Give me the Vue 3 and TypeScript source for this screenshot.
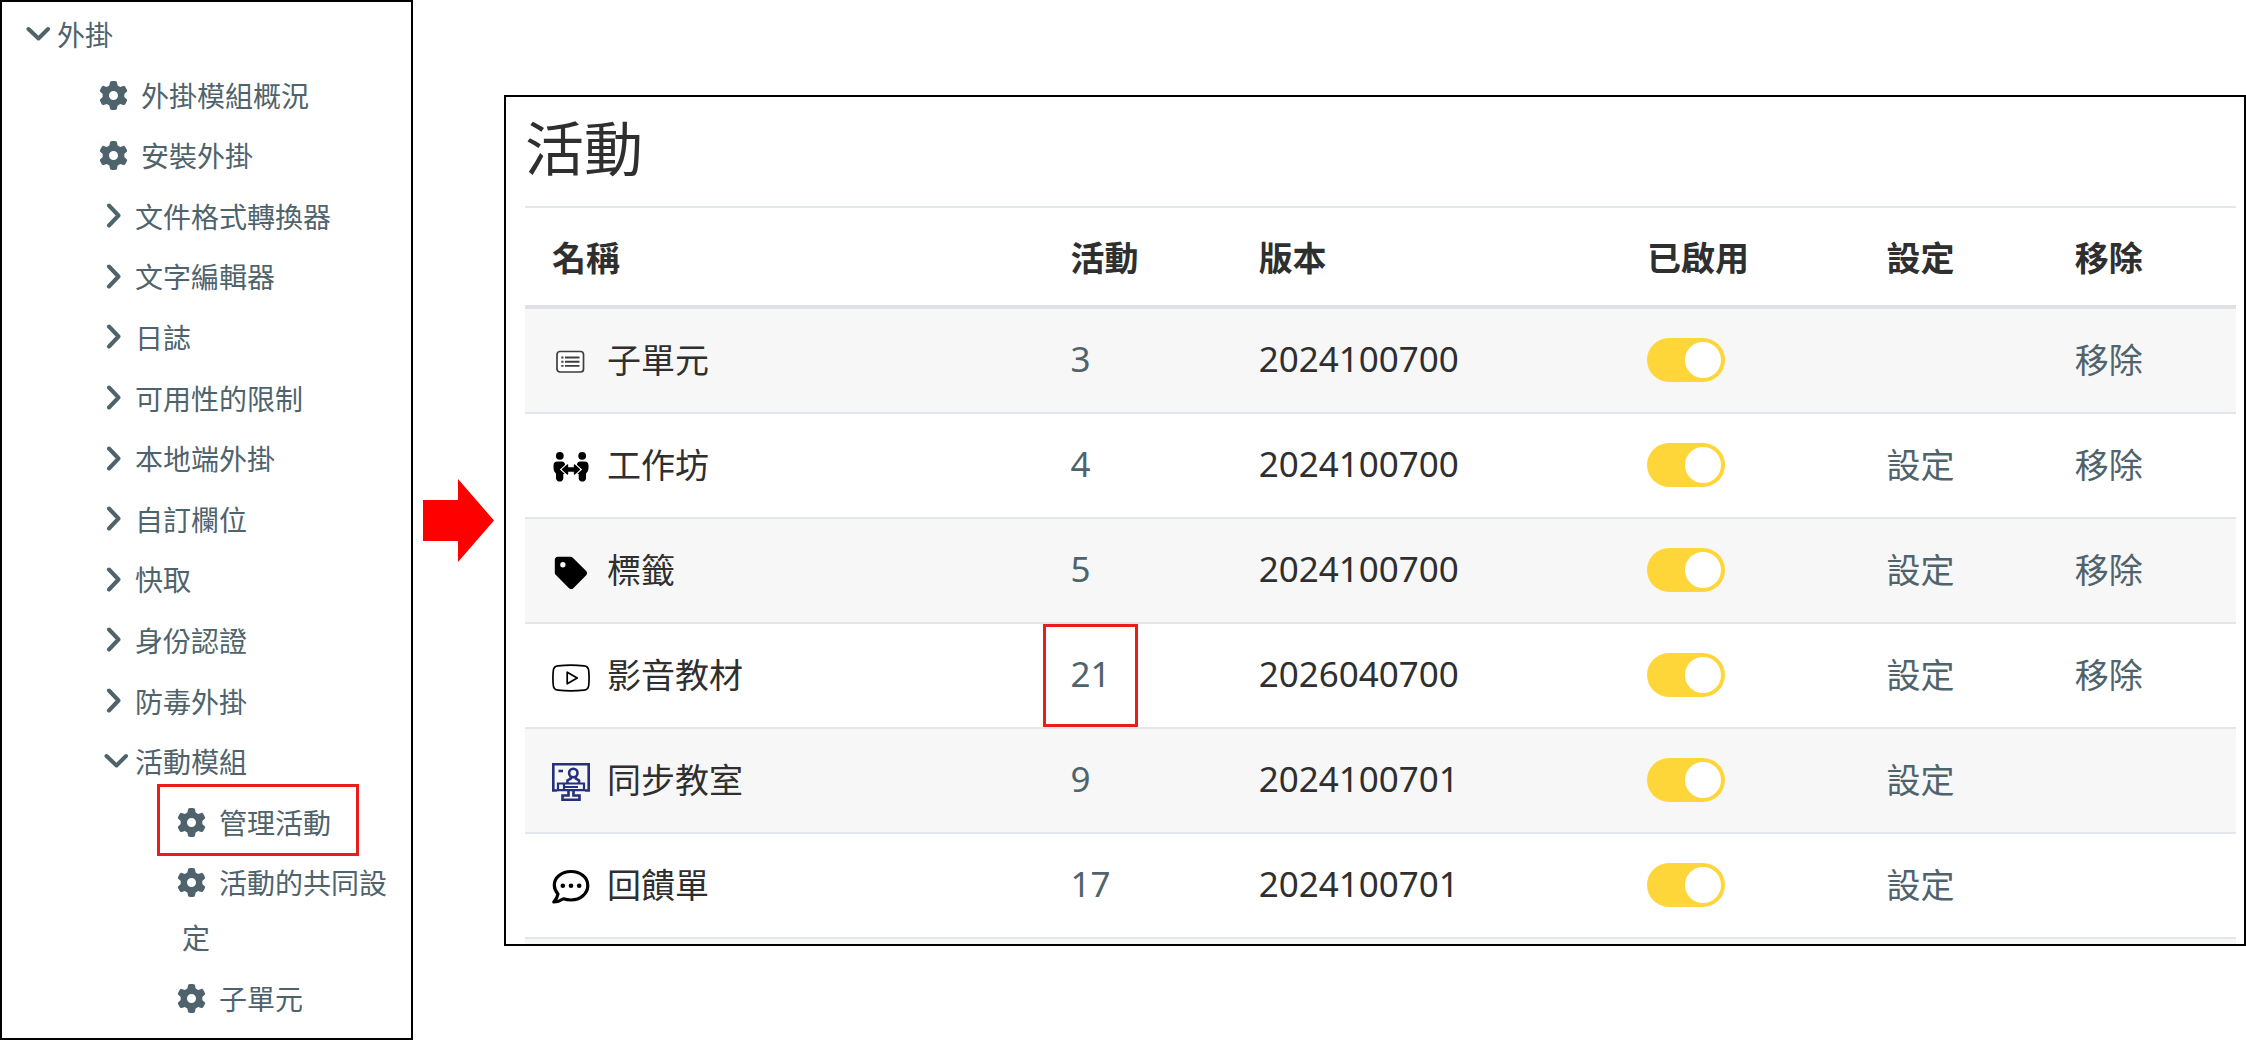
<script setup lang="ts">
type NodeKind = 'open' | 'closed' | 'setting'

interface TreeNode {
  label: string
  level: 1 | 2 | 3
  kind: NodeKind
  marked?: boolean
}

interface Activity {
  icon: 'list' | 'workshop' | 'tag' | 'video' | 'classroom' | 'feedback'
  name: string
  count: number
  version: string
  settings: boolean
  removable: boolean
  marked?: boolean
}

const nodes: TreeNode[] = [
  { label: '外掛', level: 1, kind: 'open' },
  { label: '外掛模組概況', level: 2, kind: 'setting' },
  { label: '安裝外掛', level: 2, kind: 'setting' },
  { label: '文件格式轉換器', level: 2, kind: 'closed' },
  { label: '文字編輯器', level: 2, kind: 'closed' },
  { label: '日誌', level: 2, kind: 'closed' },
  { label: '可用性的限制', level: 2, kind: 'closed' },
  { label: '本地端外掛', level: 2, kind: 'closed' },
  { label: '自訂欄位', level: 2, kind: 'closed' },
  { label: '快取', level: 2, kind: 'closed' },
  { label: '身份認證', level: 2, kind: 'closed' },
  { label: '防毒外掛', level: 2, kind: 'closed' },
  { label: '活動模組', level: 2, kind: 'open' },
  { label: '管理活動', level: 3, kind: 'setting', marked: true },
  { label: '活動的共同設定', level: 3, kind: 'setting' },
  { label: '子單元', level: 3, kind: 'setting' },
]

const activities: Activity[] = [
  { icon: 'list', name: '子單元', count: 3, version: '2024100700', settings: false, removable: true },
  { icon: 'workshop', name: '工作坊', count: 4, version: '2024100700', settings: true, removable: true },
  { icon: 'tag', name: '標籤', count: 5, version: '2024100700', settings: true, removable: true },
  { icon: 'video', name: '影音教材', count: 21, version: '2026040700', settings: true, removable: true, marked: true },
  { icon: 'classroom', name: '同步教室', count: 9, version: '2024100701', settings: true, removable: false },
  { icon: 'feedback', name: '回饋單', count: 17, version: '2024100701', settings: true, removable: false },
]
</script>

<template>
  <div class="page">
    <nav class="sidebar">
      <ul class="tree">
        <li
          v-for="node in nodes"
          :key="node.level + node.label"
          :class="['node', 'level-' + node.level, node.kind, { marked: node.marked }]"
        >
          <a v-if="node.kind === 'setting'" href="#" class="leaf"
            ><svg class="gear" viewBox="0 0 512 512" aria-hidden="true">
              <path
                d="M495.9 166.6c3.2 8.7 .5 18.4-6.4 24.6l-43.3 39.4c1.1 8.3 1.7 16.8 1.7 25.4s-.6 17.1-1.7 25.4l43.3 39.4c6.900 6.200 9.600 15.900 6.400 24.600c-4.400 11.900-9.700 23.300-15.800 34.300l-4.700 8.100c-6.600 11-14 21.400-22.100 31.200c-5.900 7.200-15.700 9.600-24.500 6.800l-55.700-17.700c-13.400 10.300-28.200 18.900-44 25.400l-12.500 57.100c-2 9.100-9 16.300-18.200 17.800c-13.800 2.300-28 3.500-42.500 3.500s-28.700-1.200-42.500-3.500c-9.200-1.500-16.200-8.700-18.200-17.800l-12.500-57.100c-15.800-6.500-30.600-15.100-44-25.400L83.100 425.900c-8.800 2.800-18.600 .3-24.500-6.800c-8.100-9.800-15.500-20.200-22.100-31.200l-4.700-8.100c-6.100-11-11.400-22.400-15.800-34.300c-3.200-8.700-.5-18.400 6.400-24.600l43.300-39.400C64.600 273.100 64 264.600 64 256s.6-17.100 1.700-25.400L22.400 191.200c-6.900-6.200-9.600-15.900-6.400-24.600c4.400-11.900 9.700-23.300 15.800-34.300l4.700-8.100c6.600-11 14-21.400 22.100-31.200c5.900-7.200 15.700-9.600 24.500-6.800l55.700 17.700c13.400-10.300 28.200-18.900 44-25.400l12.500-57.100c2-9.100 9-16.300 18.200-17.800C227.300 1.200 241.500 0 256 0s28.700 1.200 42.500 3.500c9.200 1.500 16.200 8.700 18.200 17.800l12.500 57.100c15.800 6.500 30.600 15.100 44 25.400l55.700-17.700c8.800-2.800 18.600-.3 24.500 6.800c8.100 9.800 15.500 20.200 22.100 31.200l4.700 8.100c6.100 11 11.400 22.400 15.800 34.300zM256 336a80 80 0 1 0 0-160 80 80 0 1 0 0 160z"
              /></svg
            >{{ node.label }}</a
          >
          <button v-else type="button" class="branch" :aria-expanded="node.kind === 'open'">
            <svg class="chevron" viewBox="0 0 24 26" aria-hidden="true">
              <path v-if="node.kind === 'open'" d="M2.500 7 L12.500 16.500 L22 7" />
              <path v-else d="M5 2.500 L14.500 12.500 L5 22.500" />
            </svg>
            {{ node.label }}
          </button>
        </li>
      </ul>
    </nav>

    <svg class="arrow" viewBox="0 0 71 83" aria-hidden="true">
      <path d="M0 21 H35 V0 L71 41.500 L35 83 V62 H0 Z" />
    </svg>

    <main class="panel">
      <h1>活動</h1>
      <table>
        <colgroup>
          <col class="c-name" />
          <col class="c-count" />
          <col class="c-version" />
          <col class="c-enabled" />
          <col class="c-settings" />
          <col class="c-remove" />
        </colgroup>
        <thead>
          <tr>
            <th scope="col">名稱</th>
            <th scope="col">活動</th>
            <th scope="col">版本</th>
            <th scope="col">已啟用</th>
            <th scope="col">設定</th>
            <th scope="col">移除</th>
          </tr>
        </thead>
        <tbody>
          <tr v-for="item in activities" :key="item.name">
            <td>
              <div class="name">
                <svg class="icon" viewBox="0 0 38 38" aria-hidden="true">
                  <g v-if="item.icon === 'list'" stroke="#3c3e40">
                    <rect x="5" y="8.500" width="26.500" height="20.500" rx="3" fill="#fff" stroke-width="1.700" />
                    <path d="M9.300 14.500h2.200M9.300 18.700h2.200M9.300 22.900h2.200M13 14.500h14.500M13 18.700h14.500M13 22.900h14.500" stroke-width="1.900" />
                  </g>
                  <g v-else-if="item.icon === 'workshop'">
                    <circle cx="7.800" cy="7.800" r="3.900" />
                    <circle cx="30.200" cy="7.800" r="3.900" />
                    <path d="M5.500 13.500H9.500C12 13.500 13 15 13 17V26H11.300V30.500A3.700 3.700 0 0 1 4 30.500V25.500C2.300 24 1.500 22.500 1.500 19.500V17.500Q1.500 13.500 5.500 13.500Z" />
                    <path d="M32.500 13.500H28.500C26 13.500 25 15 25 17V26H26.700V30.500A3.700 3.700 0 0 0 34 30.500V25.500C35.700 24 36.500 22.500 36.500 19.500V17.500Q36.500 13.500 32.500 13.500Z" />
                    <path d="M10.500 21.500L15.500 17V20H22.500V17L27.500 21.500L22.500 26V23H15.500V26Z" stroke="#fff" stroke-width="3.600" />
                    <path d="M10.500 21.500L15.500 17V20H22.500V17L27.500 21.500L22.500 26V23H15.500V26Z" stroke="#000" stroke-width="1.400" stroke-linejoin="round" />
                  </g>
                  <path
                    v-else-if="item.icon === 'tag'"
                    transform="translate(2.800 3.800) scale(.063)"
                    d="M0 252.118V48C0 21.490 21.490 0 48 0h204.118a48 48 0 0 1 33.941 14.059l211.882 211.882c18.745 18.745 18.745 49.137 0 67.882L293.823 497.941c-18.745 18.745-49.137 18.745-67.882 0L14.059 286.059A48 48 0 0 1 0 252.118zM128 84a42 42 0 1 0 0 84 42 42 0 1 0 0-84z"
                  />
                  <g v-else-if="item.icon === 'video'" fill="none" stroke="#000" stroke-width="1.700" stroke-linejoin="round">
                    <path d="M6 7.800C14 7 24 7 32 7.800Q36.300 8.200 36.700 12.500C37.200 17.500 37.200 22.500 36.700 27.500Q36.300 31.800 32 32.200C24 33 14 33 6 32.200Q1.700 31.800 1.300 27.500C.800 22.500 .800 17.500 1.300 12.500Q1.700 8.200 6 7.800Z" />
                    <path d="M15.200 14.200V25.800L25.200 20Z" />
                  </g>
                  <g v-else-if="item.icon === 'classroom'" fill="none" stroke="#26307c" stroke-width="2.600">
                    <path d="M5 27.500H1.300V1.300H36.700V27.500H33" />
                    <path d="M6.500 8H11" />
                    <circle cx="21.300" cy="10" r="4.200" />
                    <path d="M18.800 13.500V15.500L15.500 17.500V20M23.800 13.500V15.500L27 17.500V20" />
                    <path d="M6 27.200V20.500H32V27.200ZM12 20.500V27.500M12 24H26" stroke-width="2.200" />
                    <path d="M16.500 28V32.500H10.500V36.700H27.500V32.500H21.500V28" />
                  </g>
                  <g v-else>
                    <path
                      d="M19 3.500C9.500 3.500 2.300 9.500 2.300 17C2.300 20.500 3.700 23.500 6 26C5.500 29 4 31.500 1.800 34C5.500 34 9 32.500 11.500 30.800C13.800 31.600 16.400 32 19 32C28.500 32 35.800 25.500 35.800 17.500C35.800 9.500 28.500 3.500 19 3.500Z"
                      fill="#fff"
                      stroke="#000"
                      stroke-width="3.200"
                      stroke-linejoin="round"
                    />
                    <circle cx="10.800" cy="17.800" r="2.300" />
                    <circle cx="19" cy="17.800" r="2.300" />
                    <circle cx="27.200" cy="17.800" r="2.300" />
                  </g>
                </svg>
                {{ item.name }}
              </div>
            </td>
            <td :class="['number', { marked: item.marked }]">
              <a href="#">{{ item.count }}</a>
            </td>
            <td class="number">{{ item.version }}</td>
            <td><input type="checkbox" class="switch" checked :aria-label="'啟用' + item.name" /></td>
            <td><a v-if="item.settings" href="#">設定</a></td>
            <td><a v-if="item.removable" href="#">移除</a></td>
          </tr>
          <tr class="cut" aria-hidden="true">
            <td colspan="6"></td>
          </tr>
        </tbody>
      </table>
    </main>
  </div>
</template>

<style>
body {
  margin: 0;
  background: #fff;
}
</style>

<style scoped>
.page {
  --ink: #2f2f2f;
  --link: #4f636c;
  --mark: #ea1c1c;
  display: flex;
  align-items: center;
  box-sizing: border-box;
  min-height: 100vh;
  color: var(--ink);
  font-family: 'Noto Sans CJK TC', sans-serif;
}

.sidebar {
  display: flex;
  align-self: stretch;
  flex: 0 0 413px;
  box-sizing: border-box;
  padding: 5px 16px 12px 24px;
  border: 2px solid #000;
}

.tree {
  display: flex;
  flex: 1;
  flex-direction: column;
  justify-content: space-between;
  margin: 0;
  padding: 0;
  list-style: none;
}

.node {
  position: relative;
  color: var(--link);
  font-size: 28px;
  line-height: 55px;
}

.level-2 {
  padding-left: 78px;
}

.level-3 {
  padding-left: 156px;
}

.leaf {
  display: block;
  color: inherit;
  text-decoration: none;
  text-indent: -5px;
}

.gear {
  width: 29px;
  height: 29px;
  margin-right: 13px;
  vertical-align: -3px;
  fill: currentColor;
}

.branch {
  display: flex;
  align-items: center;
  gap: 7px;
  padding: 0;
  border: 0;
  background: none;
  color: inherit;
  font: inherit;
  line-height: inherit;
}

.chevron {
  width: 24px;
  height: 26px;
  fill: none;
  stroke: currentColor;
  stroke-width: 4;
  stroke-linecap: round;
  stroke-linejoin: round;
}

.node.marked::after {
  position: absolute;
  top: -11px;
  bottom: -6px;
  left: 131px;
  box-sizing: border-box;
  width: 202px;
  border: 3px solid var(--mark);
  content: '';
  pointer-events: none;
}

.arrow {
  flex: none;
  width: 71px;
  height: 83px;
  margin: 0 10px;
  fill: #f00;
}

.panel {
  flex: 1;
  box-sizing: border-box;
  min-width: 0;
  padding: 0 8px 0 19px;
  border: 2px solid #000;
}

h1 {
  margin: 0;
  padding: 10px 0 21px;
  font-size: 59px;
  font-weight: 400;
  line-height: 78px;
}

table {
  width: 100%;
  border-spacing: 0;
  border-top: 2px solid #e3e7eb;
  table-layout: fixed;
  font-size: 34px;
  line-height: 50px;
}

.c-name {
  width: 30.3%;
}

.c-count,
.c-settings,
.c-remove {
  width: 11%;
}

.c-version {
  width: 22.7%;
}

.c-enabled {
  width: 14%;
}

th,
td {
  box-sizing: border-box;
  padding: 0 0 0 27px;
  text-align: left;
  vertical-align: middle;
}

th {
  height: 101px;
  padding-top: 2px;
  border-bottom: 4px solid #dee2e6;
  font-weight: 700;
}

td {
  height: 105px;
  padding-bottom: 2px;
  border-top: 2px solid #e3e7eb;
}

tbody tr:first-child td {
  height: 103px;
  border-top: 0;
}

tbody tr:nth-child(odd) {
  background: #f7f7f7;
}

.cut td {
  height: 7px;
}

.name {
  display: flex;
  align-items: center;
  gap: 17px;
}

.icon {
  width: 38px;
  height: 38px;
  padding-top: 6px;
}

td a {
  color: var(--link);
  text-decoration: none;
}

.number {
  position: relative;
  font-family: 'Noto Sans', 'Noto Sans CJK TC', sans-serif;
  font-size: 35px;
}

.number.marked::after {
  position: absolute;
  inset: 0 auto 0 0;
  box-sizing: border-box;
  width: 95px;
  border: 3px solid var(--mark);
  content: '';
  pointer-events: none;
}

.switch {
  display: block;
  box-sizing: border-box;
  width: 78px;
  height: 44px;
  margin: 2px 0 0;
  padding: 4px;
  border-radius: 22px;
  appearance: none;
  background: #ffd63a;
}

.switch::before {
  display: block;
  width: 36px;
  height: 36px;
  border-radius: 50%;
  background: #fff;
  content: '';
}

.switch:checked::before {
  margin-left: auto;
}
</style>
